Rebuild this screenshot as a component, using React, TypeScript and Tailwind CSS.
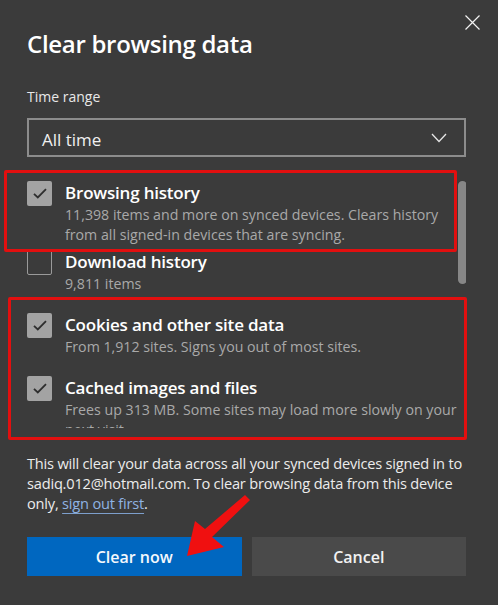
import { useState } from 'react';

type Item = { id: string; title: string; lines: string[]; checked: boolean; gap: string };

const ITEMS: Item[] = [
  {
    id: 'history',
    title: 'Browsing history',
    lines: ['11,398 items and more on synced devices. Clears history', 'from all signed-in devices that are syncing.'],
    checked: true,
    gap: 'mt-0',
  },
  { id: 'downloads', title: 'Download history', lines: ['9,811 items'], checked: false, gap: 'mt-[5px]' },
  { id: 'cookies', title: 'Cookies and other site data', lines: ['From 1,912 sites. Signs you out of most sites.'], checked: true, gap: 'mt-[19px]' },
  {
    id: 'cache',
    title: 'Cached images and files',
    lines: ['Frees up 313 MB. Some sites may load more slowly on your', 'next visit.'],
    checked: true,
    gap: 'mt-[19px]',
  },
];

function Checkbox({ checked, onClick }: { checked: boolean; onClick: () => void }) {
  if (checked) {
    return (
      <button onClick={onClick} className="w-[25px] h-[25px] shrink-0 rounded-[2px] bg-[#a3a3a3] flex items-center justify-center">
        <svg width="14" height="11" viewBox="0 0 14 11" fill="none">
          <path d="M1 5.8 L4.8 9.5 L13 1.2" stroke="#2e2e2e" strokeWidth="1.8" />
        </svg>
      </button>
    );
  }
  return <button onClick={onClick} className="w-[25px] h-[25px] shrink-0 rounded-[2px] border border-[#9a9a9a]" />;
}

export default function App() {
  const [checked, setChecked] = useState<Record<string, boolean>>(
    Object.fromEntries(ITEMS.map(i => [i.id, i.checked]))
  );

  return (
    <div className="relative w-[498px] h-[605px] overflow-hidden bg-[#3b3b3b] text-white font-['Open_Sans','Noto_Sans',sans-serif]">
      <div className="flex flex-col pl-[27px] pr-[32px]">
        <h1 className="mt-[28px] h-[32px] text-[24px] leading-[32px] font-semibold tracking-[-0.3px]">Clear browsing data</h1>

        <div className="mt-[27px] text-[14px] leading-[20px] text-[#e8e8e8]">Time range</div>
        <div className="mt-[11px] h-[39px] border-2 border-[#8c8c8c] flex items-center justify-between pl-[13px] pr-[17px] pt-[4px]">
          <span className="text-[17px] leading-[24px] text-[#f0f0f0]">All time</span>
          <svg width="16" height="10" viewBox="0 0 16 10" fill="none" className="-mt-[3px]">
            <path d="M1 1 L8 8.5 L15 1" stroke="#e6e6e6" strokeWidth="1.3" />
          </svg>
        </div>

        {/* scroll list */}
        <div className="relative mt-[6px] h-[265px] overflow-hidden pt-[18px]">
          {ITEMS.map(item => (
            <div key={item.id} className={`flex gap-[13px] ${item.gap}`}>
              <Checkbox checked={checked[item.id]} onClick={() => setChecked({ ...checked, [item.id]: !checked[item.id] })} />
              <div className="flex flex-col">
                <div className="text-[17px] leading-[24px] font-semibold tracking-[-0.2px] whitespace-nowrap">{item.title}</div>
                {item.lines.map(l => (
                  <div key={l} className="text-[14.2px] leading-[20px] text-[#a9a9a9] whitespace-nowrap">{l}</div>
                ))}
              </div>
            </div>
          ))}
          <div className="absolute top-[18px] right-[-1px] w-[9px] h-[103px] rounded-full bg-[#878787]" />
        </div>

        <p className="mt-[25px] text-[14.6px] leading-[20px] text-[#ececec] tracking-[-0.2px] whitespace-nowrap">
          This will clear your data across all your synced devices signed in to
          <br />
          sadiq.012@hotmail.com. To clear browsing data from this device
          <br />
          only, <a className="text-[#8fb3e3] underline underline-offset-[4px] decoration-[#7d9fcc]">sign out first</a>.
        </p>

        <div className="mt-[24px] flex gap-[10px]">
          <button className="flex-1 h-[39px] bg-[#0067c0] text-[16px] font-semibold text-[#f4f8fc]">Clear now</button>
          <button className="flex-1 h-[39px] bg-[#4a4a4a] text-[16px] font-semibold text-[#f2f2f2]">Cancel</button>
        </div>
      </div>

      <button className="absolute top-[15px] right-[18px] w-[15px] h-[15px]">
        <svg width="15" height="15" viewBox="0 0 15 15" fill="none">
          <path d="M0.5 0.5 L14.5 14.5 M14.5 0.5 L0.5 14.5" stroke="#f2f2f2" strokeWidth="1.2" />
        </svg>
      </button>

      {/* annotations */}
      <div className="absolute left-[4px] top-[170px] w-[453px] h-[82px] border-[3px] border-[#e20f0f] rounded-[2px] pointer-events-none" />
      <div className="absolute left-[8px] top-[297px] w-[459px] h-[143px] border-[3px] border-[#e20f0f] rounded-[2px] pointer-events-none" />
      <svg className="absolute left-0 top-0 pointer-events-none" width="498" height="605" viewBox="0 0 498 605">
        <path d="M187 556 L195 521 L205 529 L245 495 L250 500 L212 537 L224 547 Z" fill="#f01010" />
      </svg>
    </div>
  );
}
